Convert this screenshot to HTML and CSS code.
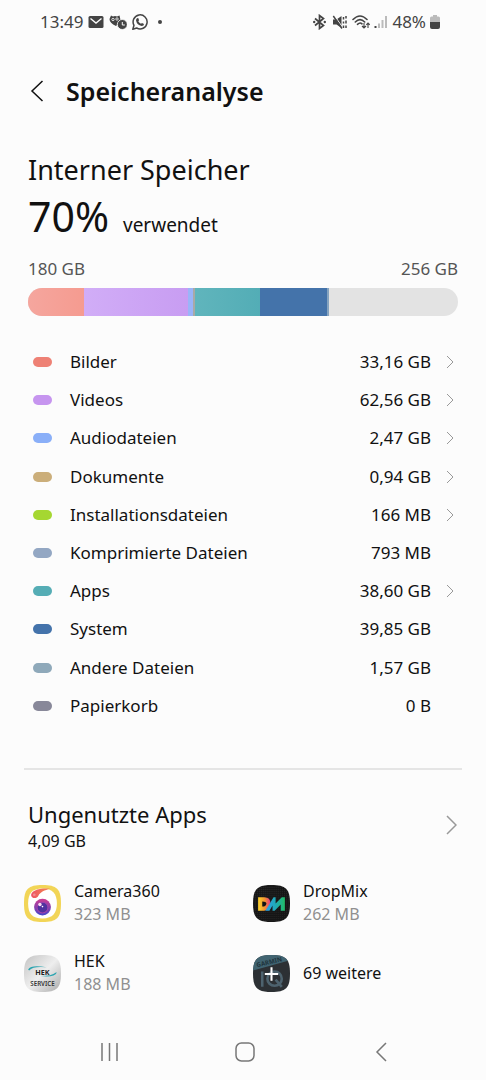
FILE: index.html
```html
<!DOCTYPE html>
<html lang="de">
<head>
<meta charset="utf-8">
<meta name="viewport" content="width=device-width, initial-scale=1">
<title>Speicheranalyse</title>
<link rel="stylesheet" href="styles.css">
</head>
<body>
<div class="screen">
  <div class="status">
    <div class="status-group">
      <span class="clock">13:49</span>
      <svg class="status-icon" viewBox="0 0 16 16"><rect x="0.5" y="2" width="15" height="12" rx="1.5" fill="#444"/><path d="M2.5 4.5 8 9l5.500-4.500" fill="none" stroke="#fcfcfc" stroke-width="1.400"/></svg>
      <svg class="status-icon status-icon-wide" viewBox="0 0 18 16"><path d="M2 1.500 4 2.500Q6 1.500 8 2.500L10.500 1.500 11.500 6Q9 7 8.500 10.500L7 12Q0.500 9 0.500 5Z" fill="#444"/><circle cx="4" cy="5.500" r="1.200" fill="none" stroke="#fcfcfc" stroke-width=".8"/><circle cx="8" cy="5" r="1.200" fill="none" stroke="#fcfcfc" stroke-width=".8"/><circle cx="13.300" cy="10.500" r="5" fill="#444" stroke="#fcfcfc" stroke-width=".8"/><path d="M13.300 8v3h2.500" fill="none" stroke="#fcfcfc"/></svg>
      <svg class="status-icon" viewBox="0 0 16 16"><path d="M.8 15.200 2 11.300A7 7 0 1 1 4.700 14Z" fill="none" stroke="#444" stroke-width="1.500" stroke-linejoin="round"/><path d="M5 4.200 6.200 4 7.100 6.200 6.300 7.300Q7.200 9 9 9.800L10 8.900 12 10Q12 12 9.700 12 5 11 4 6.500 4 5 5 4.200Z" fill="#444"/></svg>
      <span class="dot"></span>
    </div>
    <div class="status-group status-right">
      <svg class="status-icon" viewBox="0 0 16 16"><path d="M3 4.500 11.500 11.500 7.500 14.500V1.500L11.500 4.500 3 11.500" fill="none" stroke="#444" stroke-width="1.700"/><circle cx="2.200" cy="8" r="1.200" fill="#444"/><circle cx="12.800" cy="8" r="1.200" fill="#444"/></svg>
      <svg class="status-icon" viewBox="0 0 16 16"><path d="M1 5.500h3.500L9.500 2v12L4.500 10.500H1Z" fill="#444"/><path d="M2.500 1.500 11 14" stroke="#fcfcfc" stroke-width="1"/><path d="M1.300 2 10 14.500" stroke="#444" stroke-width="1.400"/><path d="M11.500 3v2.500m0 2v2m0 2v2.500M14 2v2.500m0 2v3m0 2V14" fill="none" stroke="#444" stroke-width="1.500"/></svg>
      <svg class="status-icon status-icon-wide" viewBox="0 0 18 16"><path d="M1 5.500Q8 -1.500 15 5.500M3.300 8Q8 3.200 12.700 8M5.500 10.300Q8 8 10 9.800" fill="none" stroke="#444" stroke-width="1.600" stroke-linecap="round"/><path d="M12 9v5m-2-2 2 2 2-2M16 14V9m-1.700 1.800L16 9l1.700 1.800" fill="none" stroke="#444" stroke-width="1.100"/></svg>
      <svg class="status-icon signal" viewBox="0 0 14 16"><path d="M1.500 12v2" stroke="#444" stroke-width="2"/><path d="M5 9.500V14M8.500 6v8M12 2v12" stroke="#bbb" stroke-width="2"/></svg>
      <span class="charge">48%</span>
      <svg class="battery" viewBox="0 0 10 16"><path d="M3 1h4v1.500h1.500Q10 2.500 10 4v4H0V4Q0 2.500 1.500 2.500H3Z" fill="#bbb"/><path d="M0 8h10v5q0 2-2 2H2q-2 0-2-2Z" fill="#444"/></svg>
    </div>
  </div>

  <header class="header">
    <button class="back" aria-label="Zurück"><svg viewBox="0 0 14 24"><path d="M12.500 2 2 12 12.500 22" fill="none" stroke="#111" stroke-width="1.500"/></svg></button>
    <h1 class="title">Speicheranalyse</h1>
  </header>

  <main class="main">
    <section class="summary">
      <h2 class="heading">Interner Speicher</h2>
      <p class="usage"><span class="percent">70%</span><span class="used">verwendet</span></p>
      <div class="scale"><span>180 GB</span><span>256 GB</span></div>
      <div class="bar">
        <span class="segment seg-images"></span><span class="segment seg-videos"></span><span class="segment seg-audio"></span><span class="segment seg-docs"></span><span class="segment seg-apps"></span><span class="segment seg-system"></span><span class="segment seg-other"></span>
      </div>
    </section>

    <ul class="list">
      <li><button class="row"><span class="pill images"></span><span class="name">Bilder</span><span class="size">33,16 GB</span><svg class="chevron" viewBox="0 0 8 14"><path d="M1 1l6 6-6 6"/></svg></button></li>
      <li><button class="row"><span class="pill videos"></span><span class="name">Videos</span><span class="size">62,56 GB</span><svg class="chevron" viewBox="0 0 8 14"><path d="M1 1l6 6-6 6"/></svg></button></li>
      <li><button class="row"><span class="pill audio"></span><span class="name">Audiodateien</span><span class="size">2,47 GB</span><svg class="chevron" viewBox="0 0 8 14"><path d="M1 1l6 6-6 6"/></svg></button></li>
      <li><button class="row"><span class="pill docs"></span><span class="name">Dokumente</span><span class="size">0,94 GB</span><svg class="chevron" viewBox="0 0 8 14"><path d="M1 1l6 6-6 6"/></svg></button></li>
      <li><button class="row"><span class="pill install"></span><span class="name">Installationsdateien</span><span class="size">166 MB</span><svg class="chevron" viewBox="0 0 8 14"><path d="M1 1l6 6-6 6"/></svg></button></li>
      <li><div class="row"><span class="pill archive"></span><span class="name">Komprimierte Dateien</span><span class="size">793 MB</span><span class="chevron"></span></div></li>
      <li><button class="row"><span class="pill apps"></span><span class="name">Apps</span><span class="size">38,60 GB</span><svg class="chevron" viewBox="0 0 8 14"><path d="M1 1l6 6-6 6"/></svg></button></li>
      <li><div class="row"><span class="pill system"></span><span class="name">System</span><span class="size">39,85 GB</span><span class="chevron"></span></div></li>
      <li><div class="row"><span class="pill other"></span><span class="name">Andere Dateien</span><span class="size">1,57 GB</span><span class="chevron"></span></div></li>
      <li><div class="row"><span class="pill trash"></span><span class="name">Papierkorb</span><span class="size">0 B</span><span class="chevron"></span></div></li>
    </ul>

    <section class="unused">
      <button class="unused-head">
        <span class="unused-text"><span class="unused-title">Ungenutzte Apps</span><span class="unused-size">4,09 GB</span></span>
        <svg class="chevron chevron-large" viewBox="0 0 11 20"><path d="M1 1l9 9-9 9"/></svg>
      </button>
      <div class="app-grid">
        <div class="app">
          <svg class="app-icon" viewBox="0 0 36 36"><defs><linearGradient id="lens" x2="0" y2="1"><stop stop-color="#d03d91"/><stop offset="1" stop-color="#4545c8"/></linearGradient><linearGradient id="swoosh"><stop stop-color="#ed5264"/><stop offset="1" stop-color="#f48a50"/></linearGradient></defs><path d="M18 0C32 0 36 4 36 18S32 36 18 36 0 32 0 18 4 0 18 0Z" fill="#f2d557"/><path d="M18 3.500C28 3.500 32 9 32 18S28 32.500 18 32.500 4 28 4 18 8 3.500 18 3.500Z" fill="#fff"/><path d="M25.500 3.500C16 2.500 6 5 7 10.500 8 14 13 13 14 10.500 16 6.500 20 5.500 25.500 3.500Z" fill="url(#swoosh)"/><circle cx="10" cy="9.500" r="1.300" fill="#f38d91"/><circle cx="18" cy="21.500" r="8.200" fill="url(#lens)"/><circle cx="18" cy="22" r="5.300" fill="#4f329f" stroke="#a342ad" stroke-width="1"/><circle cx="15.500" cy="19" r="1.700" fill="#ffd8ef"/><circle cx="18" cy="21" r=".8" fill="#fff"/></svg>
          <div class="app-text"><span>Camera360</span><span class="app-size">323 MB</span></div>
        </div>
        <div class="app">
          <svg class="app-icon" viewBox="0 0 36 36"><defs><pattern id="mesh" width="2" height="2" patternUnits="userSpaceOnUse"><rect width="2" height="2" fill="#151515"/><rect width="1" height="1" fill="#292929"/></pattern><linearGradient id="dleft"><stop stop-color="#ffd52e"/><stop offset=".5" stop-color="#f49a2e"/><stop offset="1" stop-color="#e93682"/></linearGradient><linearGradient id="mright"><stop stop-color="#2fa2e8"/><stop offset=".5" stop-color="#20aaba"/><stop offset="1" stop-color="#22bc65"/></linearGradient></defs><path d="M18 0C32 0 36 4 36 18S32 36 18 36 0 32 0 18 4 0 18 0Z" fill="url(#mesh)"/><path d="M5 12h6q6 0 6 6t-6 7H5Z" fill="url(#dleft)"/><path d="M9 16v5q4 0 4-3 0-2-4-2Z" fill="#151515"/><path d="M12 25 20 12h2v6l6-6h3v13h-4v-6l-6 6h-2v-5l-3 5Z" fill="url(#mright)"/></svg>
          <div class="app-text"><span>DropMix</span><span class="app-size">262 MB</span></div>
        </div>
        <div class="app">
          <svg class="app-icon" viewBox="0 0 36 36"><defs><linearGradient id="silver" x2="1" y2="1"><stop stop-color="#c3c3c3"/><stop offset=".5" stop-color="#eee"/><stop offset="1" stop-color="#aaa"/></linearGradient></defs><path d="M18 0C32 0 36 4 36 18S32 36 18 36 0 32 0 18 4 0 18 0Z" fill="url(#silver)"/><path d="M4 14Q7 9 22 12 9 10.500 5 15ZM32 17Q30 22 16 20.500 27 20.500 31 17Z" fill="#2aa4b0"/><text class="logo-name" x="18" y="19" text-anchor="middle">HEK</text><text class="logo-service" x="18" y="30" text-anchor="middle">SERVICE</text></svg>
          <div class="app-text"><span>HEK</span><span class="app-size">188 MB</span></div>
        </div>
        <button class="app">
          <svg class="app-icon" viewBox="0 0 36 36"><defs><clipPath id="tile"><path d="M18 0C32 0 36 4 36 18S32 36 18 36 0 32 0 18 4 0 18 0Z"/></clipPath></defs><g clip-path="url(#tile)"><path d="M0 0h36v36H0Z" fill="#2c3034"/><path d="M0 0h36v5L0 15Z" fill="#416471"/><text class="logo-garmin" x="4" y="12" transform="rotate(-14 4 12)">GARMIN</text><path d="M9 16v15" stroke="#4d626e" stroke-width="2.500"/><circle cx="21" cy="23" r="7" fill="none" stroke="#4d626e" stroke-width="2.500"/><path d="M22 24l6 7" stroke="#4d626e" stroke-width="2.500"/></g><path d="M18 12v13M11.500 18.500h13" stroke="#fff" stroke-width="2"/></svg>
          <span>69 weitere</span>
        </button>
      </div>
    </section>
  </main>

  <nav class="nav">
    <button class="nav-button" aria-label="Letzte Apps"><svg viewBox="0 0 20 20"><path d="M2 1v18M9.500 1v18M17 1v18"/></svg></button>
    <button class="nav-button" aria-label="Startseite"><svg viewBox="0 0 20 20"><rect x="1" y="1" width="18" height="18" rx="5.500"/></svg></button>
    <button class="nav-button" aria-label="Zurück"><svg viewBox="0 0 20 20"><path d="M16 1 7 10l9 9"/></svg></button>
  </nav>
</div>
</body>
</html>
```
FILE: styles.css
```css
* { box-sizing: border-box; }
body { margin: 0; background: #fcfcfc; color: #111; font: 17px/24px "Noto Sans", sans-serif; }
h1, h2, p, ul { margin: 0; padding: 0; }
ul { list-style: none; }
button { border: 0; padding: 0; background: none; color: inherit; font: inherit; text-align: left; cursor: pointer; }
svg { display: block; flex: none; }

.screen { display: flex; flex-direction: column; min-height: 100vh; }
.status { display: flex; justify-content: space-between; align-items: center; height: 44px; padding: 0 46px 0 40px; color: #444; }
.status-group { display: flex; align-items: center; gap: 5px; }
.status-right { gap: 4px; }
.status-icon { width: 16px; height: 16px; }
.status-icon-wide { width: 18px; }
.signal { width: 14px; }
.battery { width: 10px; height: 16px; }
.dot { width: 4px; height: 4px; margin-left: 5px; border-radius: 50%; background: #444; }

.header { display: flex; align-items: center; gap: 22px; height: 94px; padding: 0 30px; }
.back svg { width: 14px; height: 24px; }
.title { font-size: 25px; line-height: 36px; font-weight: 600; }

.main { padding: 0 24px; }
.summary { padding: 14px 4px 0; }
.heading { font-size: 27px; line-height: 36px; font-weight: 400; }
.usage { display: flex; align-items: baseline; gap: 14px; line-height: 56px; }
.percent { font-size: 41px; }
.used { font-size: 19px; }
.scale { display: flex; justify-content: space-between; margin-top: 4px; color: #555; font-size: 17px; }
.bar { display: flex; height: 28px; margin-top: 7px; overflow: hidden; border-radius: 14px; background: #e3e3e3; }
.seg-images { width: 13%; background: linear-gradient(90deg, #f5a69e, #f59b90); }
.seg-videos { width: 24.3%; background: linear-gradient(90deg, #d1adf7, #c89df2); }
.seg-audio { width: 1%; background: #9bb4f8; }
.seg-docs { width: .5%; background: #a9a9a6; }
.seg-apps { width: 15.2%; background: linear-gradient(90deg, #60b5bc, #53adb6); }
.seg-system { width: 15.6%; background: #4473aa; }
.seg-other { width: .5%; background: #86a4c0; }

.list { display: grid; grid-auto-rows: 1fr; min-height: 382px; margin-top: 27px; padding: 0 8px 0 9px; }
.row { display: flex; align-items: center; width: 100%; height: 100%; }
.pill { width: 19px; height: 10px; border-radius: 5px; }
.name { flex: 1; margin-left: 18px; }
.chevron { flex: none; width: 8px; height: 14px; margin-left: 15px; fill: none; stroke: #999; stroke-width: 1; }
.images { background: #ee8175; }
.videos { background: #c695ef; }
.audio { background: #8aaff8; }
.docs { background: #cbae7a; }
.install { background: #a5d731; }
.archive { background: #93a7c3; }
.apps { background: #55adb5; }
.system { background: #4473ab; }
.other { background: #8fa9ba; }
.trash { background: #888899; }

.unused { margin-top: 43px; padding-top: 28px; border-top: 2px solid #e5e5e5; }
.unused-head { display: flex; align-items: center; justify-content: space-between; width: 100%; padding: 0 5px 0 4px; }
.unused-text { display: flex; flex-direction: column; }
.unused-title { font-size: 22px; line-height: 32px; }
.unused-size { font-size: 16px; line-height: 22px; }
.chevron-large { width: 11px; height: 20px; stroke-width: 1.5; }
.app-grid { display: grid; grid-template-columns: 1fr 1fr; column-gap: 20px; row-gap: 24px; margin-top: 28px; font-size: 16px; line-height: 23px; }
.app { display: flex; align-items: center; gap: 13px; }
.app-icon { width: 37px; height: 37px; }
.app-text { display: flex; flex-direction: column; }
.app-size { color: #909090; }
.logo-name { font: 700 7px "Noto Sans", sans-serif; fill: #222; }
.logo-service { font: 600 6px "Noto Sans", sans-serif; fill: #333; }
.logo-garmin { font: 700 6px "Noto Sans", sans-serif; fill: #1f343d; }

.nav { display: flex; justify-content: space-around; align-items: center; height: 56px; margin-top: auto; padding: 0 38px 0 42px; }
.nav-button svg { width: 20px; height: 20px; fill: none; stroke: #777; stroke-width: 1.5; }
```
